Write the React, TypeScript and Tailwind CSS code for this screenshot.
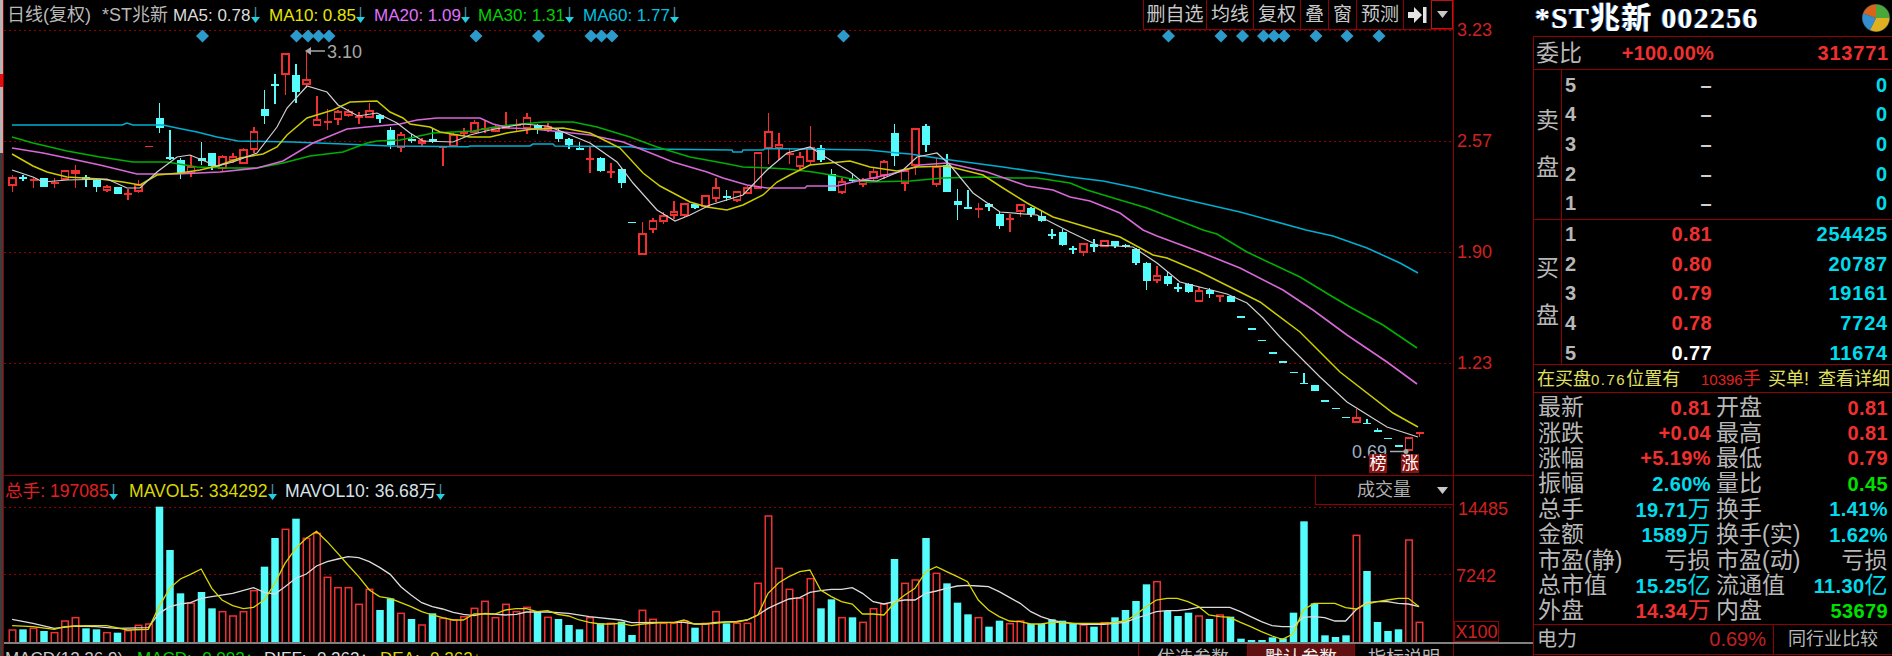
import type { ReactNode } from "react";

type Candle = [number, number, number, number, "r" | "c"];
type Pt = [number, number];

const RED = "#f03030";
const CYAN = "#54fcfc";

// [high, body top, body bottom, low, colour], in page y
const candles: Candle[] = [
  [175, 178, 185, 192, "r"], [175, 177, 179, 181, "c"], [178, 179, 180, 188, "r"], [178, 178, 187, 187, "c"], [178, 182, 183, 188, "r"],
  [171, 171, 179, 179, "r"], [165, 171, 173, 188, "r"], [175, 177, 179, 187, "c"], [179, 180, 187, 192, "c"], [185, 187, 190, 192, "r"],
  [187, 187, 194, 194, "c"], [189, 193, 194, 200, "r"], [180, 185, 191, 193, "r"], [145.5, 145.5, 146.5, 146.5, "r"], [103, 118, 128, 133, "c"],
  [130, 157, 158, 160, "c"], [158, 160, 173, 179, "c"], [155, 167, 173, 177, "r"], [142, 158, 161, 165, "c"], [153, 153, 166, 170, "c"],
  [155, 157, 168, 172, "r"], [153, 157, 160, 163, "r"], [148, 150, 163, 163, "r"], [127, 132, 149, 153, "r"], [90, 109, 116, 124, "c"],
  [74, 84, 85, 104, "c"], [53, 54, 74, 95, "r"], [64, 75, 92, 103, "c"], [52, 80, 84, 88, "r"], [96, 120, 125, 125, "r"],
  [109, 121, 122, 130, "r"], [110, 112, 119, 125, "r"], [109, 112, 115, 117, "r"], [112, 116, 117, 124, "r"], [103, 111, 117, 117, "r"],
  [114, 115, 119, 123, "c"], [127, 130, 145, 149, "c"], [132, 135, 147, 152, "r"], [134, 139, 141, 143, "c"], [138, 141, 143, 147, "r"],
  [128, 139, 142, 143, "c"], [146, 146, 147, 166, "r"], [133, 135, 146, 146, "r"], [128, 132, 133, 136, "r"], [120, 123, 132, 133, "r"],
  [121, 128, 129, 133, "r"], [124, 128, 131, 131, "r"], [112, 127, 128, 128, "r"], [119, 124, 125, 132, "r"], [113, 118, 128, 134, "r"],
  [124, 125, 130, 134, "c"], [123, 127, 130, 132, "r"], [128, 131, 139, 142, "c"], [138, 139, 145, 149, "c"], [142, 148, 149, 149, "c"],
  [147, 158, 159, 173, "r"], [157, 158, 171, 172, "c"], [163, 171, 172, 178, "r"], [168, 169, 183, 188, "c"], [222, 221.5, 222.5, 222, "c"],
  [222, 234, 254, 254, "r"], [218, 221, 229, 233, "r"], [212, 216, 221, 224, "r"], [201, 212, 215, 219, "r"], [203, 204, 215, 217, "r"],
  [203, 204, 208, 209, "c"], [195, 196, 206, 207, "r"], [178, 188, 198, 202, "r"], [190, 196, 197, 201, "c"], [192, 192, 200, 202, "r"],
  [186, 188, 193, 193, "r"], [153, 153, 188, 188, "r"], [113, 132, 148, 164, "r"], [133, 145, 148, 160, "r"], [148, 153, 154, 164, "r"],
  [152, 157, 166, 170, "r"], [126, 148, 161, 165, "r"], [145, 148, 160, 162, "c"], [169, 174, 191, 191, "c"], [178, 182, 192, 194, "r"],
  [173, 179, 181, 183, "c"], [178, 181, 184, 187, "r"], [167, 172, 178, 181, "r"], [160, 162, 175, 179, "r"], [124, 133, 156, 166, "c"],
  [168, 171, 183, 191, "r"], [129, 129, 165, 175, "r"], [124, 126, 145, 152, "c"], [158, 167, 184, 187, "r"], [154, 165, 192, 192, "c"],
  [189, 201, 205, 220, "c"], [190, 207, 208, 208, "c"], [203, 208, 209, 218, "r"], [203, 204, 207, 211, "c"], [212, 214, 226, 229, "c"],
  [214, 218, 219, 232, "r"], [204, 205, 211, 217, "r"], [207, 208, 214, 217, "c"], [211, 216, 221, 222, "c"], [229, 234, 235, 239, "c"],
  [229, 232, 245, 246, "c"], [246, 248, 249, 254, "c"], [244, 244, 252, 256, "r"], [239, 244, 247, 252, "c"], [240, 241, 246, 246, "r"],
  [241, 241, 246, 248, "c"], [244, 245, 247, 248, "c"], [248, 249, 263, 265, "c"], [262, 263, 281, 290, "c"], [266, 276, 280, 283, "r"],
  [272, 276, 284, 286, "c"], [283, 287, 288, 292, "c"], [283, 284, 292, 293, "c"], [287, 291, 301, 301, "r"], [288, 290, 294, 298, "c"],
  [295, 295, 296, 302, "r"], [295, 296, 302, 302, "c"], [316.5, 316, 317, 316.5, "c"], [328.5, 328, 329, 328.5, "c"], [340, 339.5, 340.5, 340, "c"],
  [352.5, 352, 353, 352.5, "c"], [361.5, 361, 362, 361.5, "c"], [372, 371.5, 372.5, 372, "c"], [373, 382.5, 383.5, 383.5, "c"], [385, 385, 391, 391, "c"],
  [400.5, 400, 401, 400.5, "c"], [408, 407.5, 408.5, 408, "c"], [417, 416.5, 417.5, 417, "c"], [409, 418, 422, 422, "r"], [419, 422.5, 423.5, 423.5, "c"],
  [428, 430, 431, 431, "c"], [438, 437.5, 438.5, 438, "c"], [445.5, 445, 446, 445.5, "c"], [437, 438, 450, 451, "r"], [432, 432, 433, 437, "r"],
];

const ma60: Pt[] = [[12, 125], [122, 125], [127, 123], [133, 125], [163, 125], [177, 128], [197, 132], [217, 137], [238, 141], [293, 142], [343, 144], [390, 146], [468, 146.7], [470, 146], [530, 146], [533, 144], [553, 144], [555, 146], [630, 146.7], [647, 149], [732, 150], [733, 152], [742, 152], [743, 150], [763, 150], [765, 148.7], [783, 148.7], [800, 149], [868, 150], [898, 153], [910, 154], [943, 159], [973, 163], [1003, 167], [1037, 172], [1070, 177], [1103, 181], [1137, 188], [1170, 196], [1240, 212], [1306, 230], [1333, 236], [1367, 248], [1400, 263], [1418, 273]];
const ma30: Pt[] = [[12, 137], [33, 143], [67, 151], [100, 157], [133, 162], [167, 162], [197, 167], [227, 168], [257, 168], [283, 163], [310, 156], [343, 152], [367, 143], [377, 141], [400, 140], [410, 138], [433, 133], [473, 131], [500, 126], [543, 122], [573, 122], [597, 127], [630, 137], [657, 147], [690, 157], [723, 163], [743, 167], [770, 168], [787, 169], [813, 172], [837, 176], [867, 182], [910, 181], [943, 178], [980, 177], [1013, 178], [1037, 178], [1070, 183], [1087, 190], [1120, 200], [1147, 208], [1170, 217], [1203, 230], [1217, 234], [1247, 252], [1300, 277], [1333, 297], [1350, 307], [1383, 325], [1417, 348]];
const ma20: Pt[] = [[12, 148], [43, 153], [67, 158], [100, 165], [137, 174], [177, 174], [220, 172], [257, 168], [283, 161], [313, 143], [347, 129], [367, 127], [400, 124], [417, 120], [437, 118], [480, 118], [493, 124], [510, 128], [533, 129], [563, 132], [590, 135], [623, 142], [643, 150], [673, 162], [707, 172], [723, 178], [747, 185], [767, 188], [805, 188], [807, 186], [837, 186], [853, 182], [873, 178], [903, 171], [920, 165], [947, 163], [987, 172], [1027, 186], [1053, 190], [1070, 197], [1090, 201], [1120, 213], [1143, 230], [1157, 236], [1200, 252], [1240, 268], [1283, 290], [1313, 310], [1347, 335], [1387, 362], [1417, 384]];
const ma10: Pt[] = [[12, 154], [33, 166], [47, 172], [67, 177], [100, 179], [123, 182], [140, 185], [157, 175], [180, 173], [200, 170], [217, 166], [240, 158], [263, 154], [277, 147], [287, 135], [307, 118], [333, 110], [350, 102], [377, 101], [390, 112], [403, 118], [410, 124], [430, 127], [440, 132], [470, 137], [490, 137], [507, 133], [533, 129], [563, 128], [590, 133], [610, 143], [620, 148], [643, 173], [660, 186], [690, 202], [707, 207], [727, 210], [743, 205], [763, 195], [777, 182], [790, 175], [810, 165], [850, 161], [870, 167], [897, 171], [917, 167], [947, 166], [983, 175], [1003, 188], [1027, 203], [1053, 217], [1080, 225], [1120, 237], [1153, 255], [1167, 258], [1200, 272], [1260, 302], [1300, 332], [1340, 372], [1393, 413], [1418, 427]];
const ma5: Pt[] = [[12, 170], [33, 177], [43, 182], [67, 180], [107, 179], [127, 188], [140, 188], [157, 172], [177, 157], [190, 155], [207, 162], [217, 166], [233, 162], [257, 153], [277, 127], [287, 108], [307, 86], [327, 92], [338, 105], [358, 116], [377, 113], [397, 123], [410, 133], [423, 141], [453, 142], [470, 135], [490, 130], [523, 124], [547, 126], [563, 132], [590, 143], [617, 162], [633, 183], [657, 210], [675, 221], [690, 215], [710, 205], [743, 195], [767, 170], [787, 153], [810, 147], [827, 158], [850, 172], [860, 180], [877, 181], [903, 170], [917, 157], [937, 153], [950, 165], [973, 193], [1000, 212], [1037, 215], [1070, 232], [1097, 245], [1133, 247], [1157, 263], [1180, 282], [1227, 294], [1247, 303], [1263, 318], [1280, 337], [1320, 377], [1347, 402], [1387, 427], [1418, 437]];

// volume tops, traced at 3x
const volTops: [number, "r" | "c"][] = ([
  "510r", "508c", "505r", "513c", "518r", "483r", "473r", "505c", "508c", "518r", "518c", "512r", "496r", "492r", "140c", "270c", "400c", "430r", "396c", "445c",
  "455r", "468r", "455r", "392r", "320c", "234c", "208r", "176c", "235r", "220r", "352r", "383r", "383r", "433r", "388r", "450c", "415c", "460r", "477c", "495r",
  "460c", "475r", "480r", "470r", "445r", "424r", "473r", "433r", "455r", "442r", "455c", "472r", "477c", "495c", "508c", "473r", "490c", "490r", "485c", "525c",
  "451r", "478r", "490r", "490r", "483r", "503c", "490r", "455r", "490c", "490r", "490r", "370r", "168r", "325r", "388r", "415r", "356r", "445c", "418c", "473r",
  "472c", "487r", "446r", "432r", "297c", "370r", "360r", "234c", "340r", "370c", "428c", "463c", "473r", "500c", "482c", "491r", "483r", "492c", "492c", "478c",
  "482c", "490c", "495r", "500c", "488r", "472c", "450c", "423c", "373c", "365r", "453c", "468c", "458c", "468r", "477c", "465r", "470c", "536c", "540c", "540c",
  "532c", "535c", "458c", "184c", "430c", "526c", "531c", "526c", "226r", "333c", "486c", "513c", "508c", "240r", "487r",
] as string[]).map((s) => [parseInt(s), s.endsWith("r") ? "r" : "c"]);

const volYellow: Pt[] = [
  ...([[25, 497], [68, 500], [112, 508], [133, 500], [177, 497], [220, 497], [263, 510], [306, 508], [328, 440], [350, 385], [372, 357], [393, 343], [415, 327], [437, 385], [458, 420], [480, 437], [502, 446], [523, 442], [545, 420], [567, 370], [588, 310], [610, 265], [632, 235], [653, 214], [675, 245], [697, 280], [718, 315], [740, 350], [762, 390], [783, 410], [805, 415], [827, 428], [848, 440], [870, 455], [892, 465], [913, 473], [935, 480], [956, 480], [978, 462], [1000, 462], [1021, 462], [1043, 450], [1065, 446], [1086, 446], [1108, 455], [1130, 452], [1151, 463], [1173, 468], [1195, 480], [1216, 487], [1238, 492], [1260, 492], [1281, 490], [1303, 497], [1325, 492], [1346, 490], [1368, 488], [1390, 488], [1411, 480], [1433, 492], [1455, 492], [1476, 490], [1498, 486], [1520, 486], [1541, 480]] as Pt[]).map(leftPt),
  ...([[35, 465], [55, 400], [76, 368], [96, 350], [117, 335], [137, 330], [158, 390], [179, 410], [199, 425], [220, 432], [240, 462], [261, 462], [282, 465], [302, 430], [323, 405], [343, 385], [364, 335], [385, 320], [405, 335], [426, 350], [446, 365], [467, 420], [487, 450], [508, 470], [528, 483], [549, 485], [570, 492], [590, 492], [611, 487], [631, 487], [652, 490], [672, 490], [693, 490], [713, 490], [734, 487], [755, 483], [775, 465], [796, 440], [816, 420], [837, 415], [857, 415], [878, 425], [899, 440], [919, 465], [940, 470], [960, 472], [981, 487], [1001, 500], [1022, 515], [1043, 528], [1063, 538], [1084, 522], [1104, 450], [1125, 430], [1146, 430], [1166, 430], [1187, 443], [1207, 447], [1228, 432], [1249, 425], [1269, 420], [1290, 415], [1310, 415], [1331, 440]] as Pt[]).map(rightPt),
];
const volWhite: Pt[] = [
  ...([[25, 478], [68, 490], [112, 505], [155, 498], [198, 500], [241, 505], [306, 503], [328, 460], [350, 440], [372, 432], [393, 428], [415, 415], [437, 410], [480, 400], [523, 383], [545, 397], [567, 402], [588, 380], [610, 355], [632, 342], [653, 318], [675, 305], [697, 297], [718, 290], [740, 293], [762, 305], [783, 322], [805, 343], [827, 380], [848, 405], [870, 428], [892, 440], [913, 447], [935, 457], [956, 463], [978, 467], [1000, 460], [1043, 465], [1065, 463], [1086, 456], [1130, 456], [1173, 460], [1216, 470], [1281, 480], [1303, 488], [1368, 487], [1411, 487], [1433, 492], [1455, 492], [1476, 487], [1520, 484], [1541, 480]] as Pt[]).map(leftPt),
  ...([[35, 465], [55, 445], [76, 430], [96, 417], [117, 413], [137, 397], [158, 392], [179, 388], [199, 388], [220, 383], [240, 400], [261, 425], [282, 432], [302, 425], [323, 420], [343, 420], [364, 400], [385, 393], [405, 385], [426, 378], [446, 376], [467, 378], [487, 380], [508, 395], [528, 412], [549, 430], [570, 455], [590, 470], [611, 480], [631, 487], [652, 490], [672, 493], [693, 493], [713, 493], [734, 490], [755, 487], [775, 475], [796, 465], [816, 455], [837, 452], [857, 452], [878, 448], [899, 442], [919, 442], [940, 442], [960, 442], [981, 455], [1001, 470], [1022, 485], [1043, 497], [1063, 500], [1084, 500], [1104, 472], [1125, 470], [1146, 473], [1166, 483], [1187, 483], [1207, 450], [1228, 428], [1249, 425], [1269, 425], [1290, 430], [1310, 432], [1331, 440]] as Pt[]).map(rightPt),
];

function leftPt([x, y]: Pt): Pt {
  return [x / 2.063, 460 + y / 3];
}
function rightPt([x, y]: Pt): Pt {
  return [740 + x / 1.96, 460 + y / 3];
}

const diamonds = [202.5, 296.5, 308, 318.5, 329, 476, 538.5, 591, 601.5, 612, 843.5, 1168.5, 1221, 1242.5, 1263.5, 1274, 1284, 1316, 1347, 1379];

const barX = (i: number) => 12.5 + 10.5 * i;
const pts = (p: Pt[]) => p.map(([x, y]) => `${x},${y}`).join(" ");

function DownArrow({ up }: { up?: boolean }) {
  return (
    <svg width="9" height="17" viewBox="0 0 9 17" className={up ? "rotate-180" : ""}>
      <line x1="4.5" y1="0" x2="4.5" y2="12" stroke={up ? "#c02020" : "#3f7f90"} strokeWidth="1.5" />
      <polygon points="0,10 9,10 4.5,16" fill={up ? "#f03030" : "#20d0e0"} />
    </svg>
  );
}

function MainChart() {
  return (
    <svg viewBox="4 30 1449 445" className="block w-[1449px] h-[445px]">
      <line x1="4" y1="30.5" x2="1453" y2="30.5" stroke="#900000" strokeWidth="1" strokeDasharray="2 3" />
      <line x1="4" y1="141.5" x2="1453" y2="141.5" stroke="#900000" strokeWidth="1" strokeDasharray="2 3" />
      <line x1="4" y1="252.5" x2="1453" y2="252.5" stroke="#900000" strokeWidth="1" strokeDasharray="2 3" />
      <line x1="4" y1="363.5" x2="1453" y2="363.5" stroke="#900000" strokeWidth="1" strokeDasharray="2 3" />
      {diamonds.map((x) => (
        <polygon key={x} points={`${x - 6.5},36 ${x},29.5 ${x + 6.5},36 ${x},42.5`} fill="#2a9bcb" />
      ))}
      {candles.map(([hi, top, bot, lo, kind], i) => {
        const x = barX(i);
        const color = kind === "r" ? RED : CYAN;
        const isDash = hi === lo || bot - top <= 1;
        return (
          <g key={i} shapeRendering="crispEdges">
            <line x1={x} y1={hi} x2={x} y2={lo} stroke={color} strokeWidth="1.5" />
            {isDash ? (
              <rect x={x - 4} y={top} width="8" height="1.5" fill={color} />
            ) : kind === "r" ? (
              <rect x={x - 3.5} y={top} width="7" height={bot - top} fill="#000" stroke={color} strokeWidth="1.5" />
            ) : (
              <rect x={x - 4} y={top} width="8" height={bot - top} fill={color} />
            )}
          </g>
        );
      })}
      <polyline points={pts(ma60)} fill="none" stroke="#00aed0" strokeWidth="1.6" />
      <polyline points={pts(ma30)} fill="none" stroke="#00b000" strokeWidth="1.6" />
      <polyline points={pts(ma20)} fill="none" stroke="#d868d8" strokeWidth="1.6" />
      <polyline points={pts(ma10)} fill="none" stroke="#cccc00" strokeWidth="1.5" />
      <polyline points={pts(ma5)} fill="none" stroke="#d0d0d0" strokeWidth="1.2" />

      <line x1="310" y1="51" x2="325" y2="51" stroke="#a8a8a8" strokeWidth="1.5" />
      <polygon points="305,51 311,47 311,55" fill="#a8a8a8" />
      <text x="327" y="58" fill="#a8a8a8" fontSize="18" className="font-['Liberation_Sans',sans-serif]">3.10</text>
      <text x="1352" y="458" fill="#9fb0c0" fontSize="18" className="font-['Liberation_Sans',sans-serif]">0.69</text>
      <line x1="1390" y1="451.5" x2="1404" y2="451.5" stroke="#a8a8a8" strokeWidth="1.5" />
      <circle cx="1406" cy="451.5" r="2.5" fill="#a8a8a8" />
    </svg>
  );
}

function VolumeChart() {
  return (
    <svg viewBox="4 506 1449 136" className="block w-[1449px] h-[136px]">
      <line x1="4" y1="507.5" x2="1453" y2="507.5" stroke="#900000" strokeWidth="1" strokeDasharray="2 3" />
      <line x1="4" y1="574.5" x2="1453" y2="574.5" stroke="#900000" strokeWidth="1" strokeDasharray="2 3" />
      {volTops.map(([t, kind], i) => {
        const x = barX(i);
        const top = 460 + t / 3;
        return kind === "c" ? (
          <rect key={i} x={x - 3.75} y={top} width="7.5" height={642 - top} fill={CYAN} />
        ) : (
          <rect key={i} x={x - 3.25} y={top} width="6.5" height={643 - top} fill="#000" stroke={RED} strokeWidth="1.5" />
        );
      })}
      <polyline points={pts(volWhite)} fill="none" stroke="#dcdcdc" strokeWidth="1.3" />
      <polyline points={pts(volYellow)} fill="none" stroke="#d8d800" strokeWidth="1.3" />
    </svg>
  );
}

function Legend({ color, label, arrow = true }: { color: string; label: string; arrow?: boolean }) {
  return (
    <span className={`flex items-center ${color}`}>
      <span>{label}</span>
      {arrow && <DownArrow />}
    </span>
  );
}

function ToolButton({ width, children }: { width: string; children: ReactNode }) {
  return <div className={`flex items-center justify-center border-l border-[#900000] text-[19px] text-[#c8c8c8] ${width}`}>{children}</div>;
}

function Row({ label, labelClass, value, valueClass, unit, label2, value2, value2Class, unit2 }: {
  label: string; labelClass?: string; value: string; valueClass: string; unit?: string;
  label2: string; value2: string; value2Class: string; unit2?: string;
}) {
  return (
    <div className="flex h-[25.4px] items-center">
      <div className="flex w-[178px] items-center justify-between pl-[4px] pr-[1px]">
        <span className={`text-[23px] text-[#b8b8b8] whitespace-nowrap ${labelClass ?? ""}`}>{label}</span>
        <span className={`text-[20px] font-bold tracking-[0.4px] whitespace-nowrap ${valueClass}`}>
          {value}
          {unit && <span className="text-[23px] font-normal">{unit}</span>}
        </span>
      </div>
      <div className="flex w-[178px] items-center justify-between pl-[4px] pr-[2px]">
        <span className="text-[23px] text-[#b8b8b8] whitespace-nowrap">{label2}</span>
        <span className={`text-[20px] font-bold tracking-[0.4px] whitespace-nowrap ${value2Class}`}>
          {value2}
          {unit2 && <span className="text-[23px] font-normal">{unit2}</span>}
        </span>
      </div>
    </div>
  );
}

function DepthRow({ n, price, priceClass, vol }: { n: string; price: string; priceClass: string; vol: string }) {
  return (
    <div className="flex h-[29.6px] items-center text-[20px] font-bold">
      <span className="w-[24px] pl-[3px] text-[#b8b8b8]">{n}</span>
      <span className={`w-[126px] text-right tracking-[0.4px] ${priceClass}`}>{price}</span>
      <span className="w-[176px] text-right tracking-[0.8px] text-[#00dcec]">{vol}</span>
    </div>
  );
}

const stats = [
  { label: "最新", value: "0.81", valueClass: "text-[#f03030]", label2: "开盘", value2: "0.81", value2Class: "text-[#f03030]" },
  { label: "涨跌", value: "+0.04", valueClass: "text-[#f03030]", label2: "最高", value2: "0.81", value2Class: "text-[#f03030]" },
  { label: "涨幅", value: "+5.19%", valueClass: "text-[#f03030]", label2: "最低", value2: "0.79", value2Class: "text-[#f03030]" },
  { label: "振幅", value: "2.60%", valueClass: "text-[#00dcec]", label2: "量比", value2: "0.45", value2Class: "text-[#00e000]" },
  { label: "总手", value: "19.71", unit: "万", valueClass: "text-[#00dcec]", label2: "换手", value2: "1.41%", value2Class: "text-[#00dcec]" },
  { label: "金额", value: "1589", unit: "万", valueClass: "text-[#00dcec]", label2: "换手(实)", value2: "1.62%", value2Class: "text-[#00dcec]" },
  { label: "市盈(静)", value: "", unit: "亏损", valueClass: "text-[#b8b8b8]", label2: "市盈(动)", value2: "", unit2: "亏损", value2Class: "text-[#b8b8b8]" },
  { label: "总市值", value: "15.25", unit: "亿", valueClass: "text-[#00dcec]", label2: "流通值", value2: "11.30", unit2: "亿", value2Class: "text-[#00dcec]" },
  { label: "外盘", value: "14.34", unit: "万", valueClass: "text-[#f03030]", label2: "内盘", value2: "53679", value2Class: "text-[#00e000]" },
];

export default function App() {
  return (
    <div className="flex h-[656px] w-[1892px] overflow-hidden bg-black font-['Liberation_Sans','Noto_Sans_CJK_SC',sans-serif] leading-none">
      {/* scroll strip on the far left */}
      <div className="flex w-[4px] shrink-0 flex-col border-r border-[#900000]">
        <div className="h-[74px] bg-[#b4b4b4]" />
        <div className="h-[13px] bg-[#e01010]" />
        <div className="h-[66px] bg-[#b4b4b4]" />
        <div className="flex-1 bg-[#3c3c3c]" />
      </div>

      {/* chart column */}
      <div className="flex w-[1529px] shrink-0 flex-col">
        <div className="flex h-[475px]">
          <div className="w-[1449px] shrink-0">
            <div className="flex h-[30px] items-start justify-between">
              <div className="flex h-[30px] items-center pl-[3px] text-[17px] whitespace-nowrap">
                <span className="w-[95px] text-[18px] text-[#b8b8b8]">日线(复权)</span>
                <span className="w-[71px] text-[18px] text-[#b8b8b8]">*ST兆新</span>
                <div className="flex gap-[5px]">
                  <span className="w-[91px]"><Legend color="text-[#dcdcdc]" label="MA5: 0.78" /></span>
                  <span className="w-[100px]"><Legend color="text-[#e6e600]" label="MA10: 0.85" /></span>
                  <span className="w-[99px]"><Legend color="text-[#e070ff]" label="MA20: 1.09" /></span>
                  <span className="w-[100px]"><Legend color="text-[#00d000]" label="MA30: 1.31" /></span>
                  <span className="w-[100px]"><Legend color="text-[#00c0e0]" label="MA60: 1.77" /></span>
                </div>
              </div>
              <div className="flex h-[30px] border-b border-[#900000]">
                <ToolButton width="w-[63px]">删自选</ToolButton>
                <ToolButton width="w-[47px]">均线</ToolButton>
                <ToolButton width="w-[47px]">复权</ToolButton>
                <ToolButton width="w-[28px]">叠</ToolButton>
                <ToolButton width="w-[28px]">窗</ToolButton>
                <ToolButton width="w-[47px]">预测</ToolButton>
                <ToolButton width="w-[28px]">
                  <svg width="20" height="16" viewBox="0 0 20 16">
                    <polygon points="0,5 6,5 6,0 14,8 6,16 6,11 0,11" fill="#e4e4e4" />
                    <rect x="15" y="0" width="3.5" height="16" fill="#e4e4e4" />
                  </svg>
                </ToolButton>
                <div className="flex w-[22px] items-center justify-center border border-[#c01010]">
                  <svg width="11" height="7" viewBox="0 0 11 7"><polygon points="0,0 11,0 5.5,7" fill="#c8c8c8" /></svg>
                </div>
              </div>
            </div>
            <div className="relative">
              <MainChart />
              <span className="absolute left-[1365px] top-[424px] flex h-[19px] w-[18px] items-center justify-center bg-[#8a1010] text-[17px] text-white">榜</span>
              <span className="absolute left-[1397px] top-[424px] flex h-[19px] w-[18px] items-center justify-center bg-[#8a1010] text-[17px] text-white">涨</span>
            </div>
          </div>
          <div className="flex-1 border-l border-[#900000] pt-[21px] pl-[3px] text-[18px] text-[#d02020]">
            <div className="h-[111px]">3.23</div>
            <div className="h-[111px]">2.57</div>
            <div className="h-[111px]">1.90</div>
            <div className="h-[111px]">1.23</div>
          </div>
        </div>

        <div className="flex h-[167px] border-t border-[#900000]">
          <div className="w-[1449px] shrink-0">
            <div className="flex h-[30px] items-start justify-between">
              <div className="flex h-[30px] items-center pl-[1px] pt-[2px] text-[17.6px] whitespace-nowrap">
                <span className="w-[124px]"><Legend color="text-[#e02020]" label="总手: 197085" /></span>
                <span className="w-[156px]"><Legend color="text-[#d8d800]" label="MAVOL5: 334292" /></span>
                <Legend color="text-[#d8e0e8]" label="MAVOL10: 36.68万" />
              </div>
              <div className="flex h-[29px] w-[138px] items-center border-b border-l border-[#900000] text-[18px] text-[#b0b0b0]">
                <span className="ml-[41px] w-[80px]">成交量</span>
                <svg width="11" height="7" viewBox="0 0 11 7"><polygon points="0,0 11,0 5.5,7" fill="#c8c8c8" /></svg>
              </div>
            </div>
            <VolumeChart />
          </div>
          <div className="flex flex-1 flex-col border-l border-[#900000] text-[18px] text-[#d02020]">
            <div className="h-[67px] pt-[24px] pl-[4px]">14485</div>
            <div className="h-[46px] pl-[2px] pt-[24px]">7242</div>
            <div className="mt-auto flex h-[21px] w-[45px] items-center justify-center border border-[#900000]">X100</div>
          </div>
        </div>

        <div className="flex h-[14px] border-t-2 border-[#808080] whitespace-nowrap">
          <div className="flex w-[1449px] shrink-0 justify-between overflow-hidden">
            <div className="flex pl-[1px] pt-[6px] text-[17px]">
              <span className="w-[132px] text-[#c8c8c8]">MACD(12,26,9)</span>
              <span className="w-[127px] text-[#00d000]">MACD: -0.002↑</span>
              <span className="w-[116px] text-[#dcdcdc]">DIFF: -0.262↑</span>
              <span className="text-[#d8d800]">DEA: -0.262↓</span>
            </div>
            <div className="flex text-[18px]">
              <span className="flex w-[109px] justify-center border-l border-[#900000] pt-[5px] text-[#b8b8b8]">优选参数</span>
              <span className="flex w-[108px] justify-center border-x border-[#900000] bg-[#601010] pt-[5px] text-[#f0f0f0]">默认参数</span>
              <span className="flex w-[98px] justify-center pt-[5px] text-[#b8b8b8]">指标说明</span>
            </div>
          </div>
          <div className="flex-1 border-l border-[#900000]" />
        </div>
      </div>

      {/* quote panel */}
      <div className="flex w-[359px] shrink-0 flex-col">
        <div className="flex h-[36px] items-center justify-between pl-[2px] pr-[1px]">
          <span className="font-['Liberation_Serif','Noto_Sans_CJK_SC',serif] text-[30px] font-bold tracking-[1.2px] text-white [text-shadow:-1px_0_#3f7fc0]">*ST兆新 002256</span>
          <svg width="30" height="30" viewBox="0 0 30 30">
            <circle cx="15" cy="15" r="14" fill="#444" />
            <path d="M15 15 L15 1.5 A13.5 13.5 0 0 0 2.2 10.5 Z" fill="#d8641c" />
            <path d="M15 15 L15 1.5 A13.5 13.5 0 0 1 28.5 15 Z" fill="#4aa83a" />
            <path d="M15 15 L28.5 15 A13.5 13.5 0 0 1 9 27 Z" fill="#e0b020" />
            <path d="M15 15 L9 27 A13.5 13.5 0 0 1 2.2 10.5 Z" fill="#2f8fd0" />
          </svg>
        </div>

        <div className="flex min-h-0 flex-1 flex-col border-l border-t border-[#900000]">
          <div className="flex h-[33px] shrink-0 items-center border-b border-[#900000] pl-[2px]">
            <span className="w-[60px] text-[23px] text-[#b8b8b8]">委比</span>
            <span className="w-[118px] text-right text-[20px] font-bold tracking-[0.2px] text-[#f03030]">+100.00%</span>
            <span className="w-[175px] text-right text-[20px] font-bold tracking-[0.8px] text-[#f03030]">313771</span>
          </div>

          <div className="flex h-[149.5px] shrink-0 border-b border-[#900000]">
            <div className="flex w-[28px] flex-col items-center justify-center gap-[24px] border-r border-[#900000] text-[23px] text-[#b8b8b8]">
              <span>卖</span>
              <span>盘</span>
            </div>
            <div className="flex-1">
              <DepthRow n="5" price="–" priceClass="text-[#d0d0d0]" vol="0" />
              <DepthRow n="4" price="–" priceClass="text-[#d0d0d0]" vol="0" />
              <DepthRow n="3" price="–" priceClass="text-[#d0d0d0]" vol="0" />
              <DepthRow n="2" price="–" priceClass="text-[#d0d0d0]" vol="0" />
              <DepthRow n="1" price="–" priceClass="text-[#d0d0d0]" vol="0" />
            </div>
          </div>

          <div className="flex h-[145.5px] shrink-0 border-b border-[#900000]">
            <div className="flex w-[28px] flex-col items-center justify-center gap-[24px] border-r border-[#900000] text-[23px] text-[#b8b8b8]">
              <span>买</span>
              <span>盘</span>
            </div>
            <div className="flex-1">
              <DepthRow n="1" price="0.81" priceClass="text-[#f03030]" vol="254425" />
              <DepthRow n="2" price="0.80" priceClass="text-[#f03030]" vol="20787" />
              <DepthRow n="3" price="0.79" priceClass="text-[#f03030]" vol="19161" />
              <DepthRow n="4" price="0.78" priceClass="text-[#f03030]" vol="7724" />
              <DepthRow n="5" price="0.77" priceClass="text-white" vol="11674" />
            </div>
          </div>

          <div className="flex h-[28px] shrink-0 items-center border-b border-[#900000] pl-[3px] text-[18px] whitespace-nowrap text-[#e0e060]">
            <span className="w-[164px]">在买盘<span className="text-[15px] tracking-[1.5px]">0.76</span>位置有</span>
            <span className="w-[67px] text-[#e02020]"><span className="text-[15px]">10396</span>手</span>
            <span className="w-[50px]">买单!</span>
            <span>查看详细</span>
          </div>

          <div className="h-[230.6px] shrink-0 pt-[2px]">
            {stats.map((s) => (
              <Row key={s.label} {...s} />
            ))}
          </div>

          <div className="flex h-[31.4px] shrink-0 items-center border-y border-[#900000]">
            <span className="w-[75px] pl-[3px] text-[20px] text-[#b8b8b8]">电力</span>
            <span className="w-[157px] text-right text-[20px] text-[#c02020]">0.69%</span>
            <span className="ml-[7px] flex h-full items-center border-l border-[#900000] pl-[14px] text-[18px] text-[#b8b8b8]">同行业比较</span>
          </div>
        </div>
      </div>
    </div>
  );
}
